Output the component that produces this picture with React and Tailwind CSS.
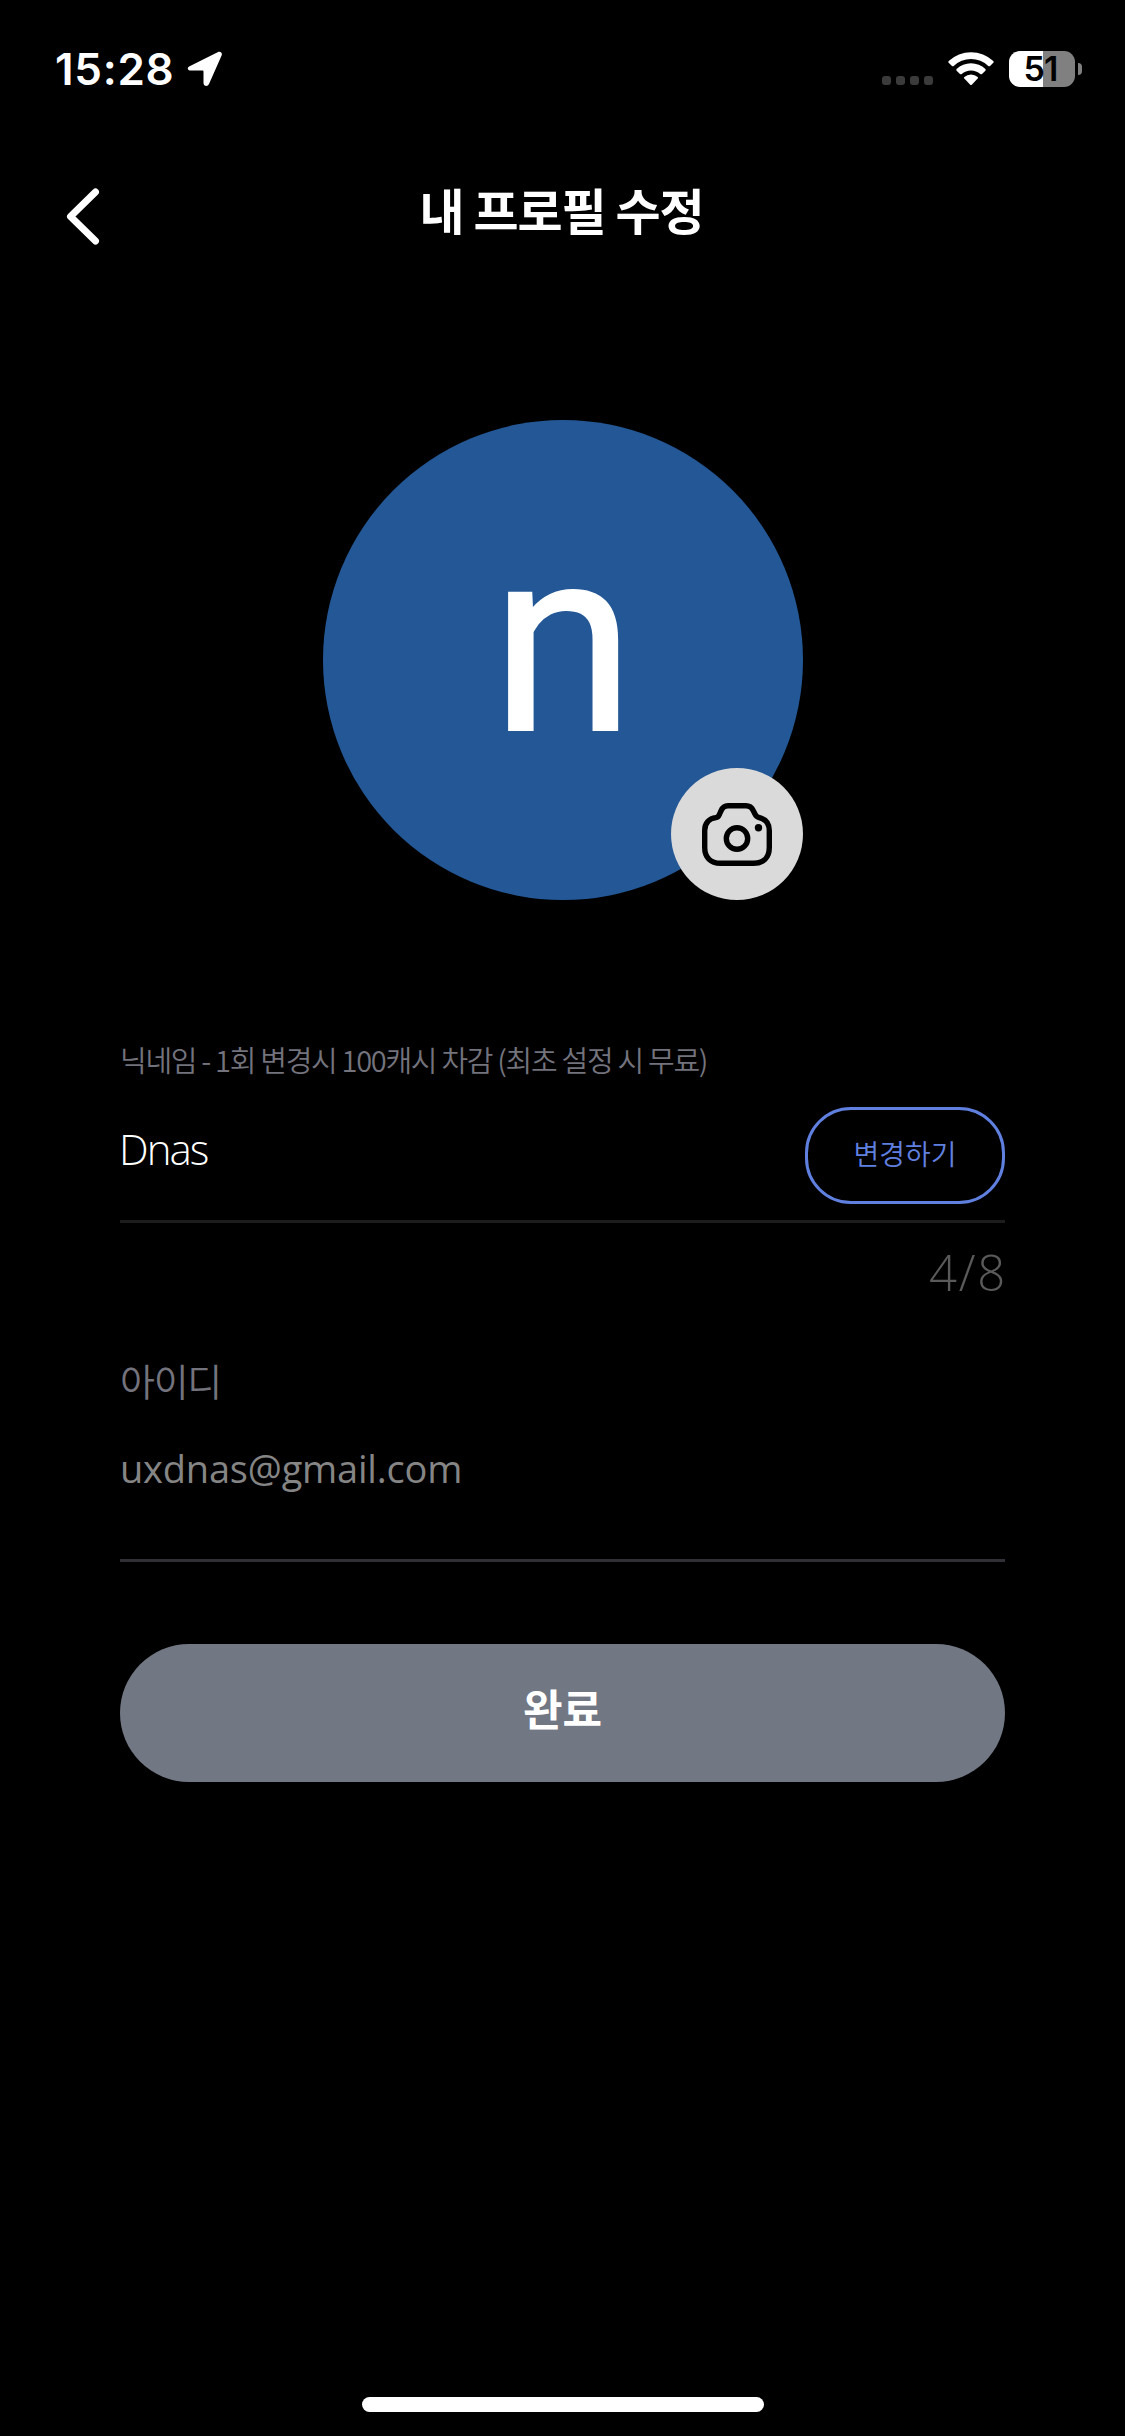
import React from 'react';

function LocationArrow() {
  return (
    <svg width="36" height="36" viewBox="0 0 36 36" fill="white">
      <path d="M2.6 15.2 L30.6 1.3 C33.6 -.2 35.8 2 34.5 4.8 L22 33 C20.7 36 16.5 35.3 16.5 32 V20.5 Q16.5 19.6 15.5 19.6 H4 C.5 19.6 -.4 16.7 2.6 15.2 Z" />
    </svg>
  );
}

function Wifi() {
  return (
    <svg width="46" height="34" viewBox="0 0 46 34" fill="white">
      <path d="M.7 9.1 A32.5 32.5 0 0 1 45.3 9.1 Q46 9.9 45.3 10.7 L42 14 Q41.2 14.7 40.3 14 A25 25 0 0 0 5.7 14 Q4.8 14.7 4 14 L.7 10.7 Q0 9.9 .7 9.1 Z" />
      <path d="M8.6 17.1 A20.8 20.8 0 0 1 37.4 17.1 Q38.1 17.9 37.4 18.7 L34 22 Q33.2 22.7 32.3 22 A13.8 13.8 0 0 0 13.7 22 Q12.8 22.7 12 22 L8.6 18.7 Q7.9 17.9 8.6 17.1 Z" />
      <path d="M16.3 25 A10 10 0 0 1 29.7 25 Q30.4 25.8 29.7 26.6 L24 32.4 Q23 33.4 22 32.4 L16.3 26.6 Q15.6 25.8 16.3 25 Z" />
    </svg>
  );
}

function Camera() {
  return (
    <svg width="70" height="63" viewBox="0 0 70 63" fill="none" stroke="black" strokeWidth="5.4">
      <path strokeLinejoin="round" d="M26 2.7 H44 C47.5 2.7 49.7 4.3 51.2 7.5 L52.7 10.5 C53.7 12.6 54.5 13.8 56.5 14.3 C63.5 16 67.3 20.5 67.3 27.5 V44.5 C67.3 54.5 61.5 60.3 51.5 60.3 H18.5 C8.5 60.3 2.7 54.5 2.7 44.5 V27.5 C2.7 20 7 15.5 14 14.6 C16.3 14.3 16.8 12.8 17.6 11 L19 7.8 C20.4 4.5 22.6 2.7 26 2.7 Z" />
      <circle cx="35" cy="35.5" r="10.7" />
      <circle cx="56.5" cy="24.7" r="3.7" fill="black" stroke="none" />
    </svg>
  );
}

function StatusBar() {
  return (
    <div className="flex h-[138px] items-start justify-between pl-[55px] pr-[43px]">
      <div className="flex items-center pt-[46px]">
        <span className="w-[132px] whitespace-nowrap font-['Inter',sans-serif] text-[44px] font-[560] leading-[46px] tracking-[0.7px]">15:28</span>
        <div className="-mt-[1px]"><LocationArrow /></div>
      </div>
      <div className="flex pt-[51px]">
        <div className="mt-[25px] flex gap-[5px]">
          {[0, 1, 2, 3].map((i) => (
            <i key={i} className="size-[9px] rounded-[3px] bg-[#3b3b3b]" />
          ))}
        </div>
        <div className="ml-[15px] mt-[1px]"><Wifi /></div>
        <div className="ml-[15px] h-9 w-[66px] rounded-[11px] bg-[linear-gradient(90deg,#fff_34px,#808080_34px)] pr-[3px] text-center font-['Inter',sans-serif] text-[34px] font-semibold leading-9 tracking-[-1px] text-black">
          51
        </div>
        <div className="ml-[3px] mt-3 h-3 w-1 rounded-r-full bg-[#808080]" />
      </div>
    </div>
  );
}

function App() {
  return (
    <div className="flex h-[2436px] w-[1125px] flex-col overflow-hidden bg-black font-['Noto_Sans_CJK_KR',sans-serif] text-white">
      <StatusBar />

      <header className="grid h-[282px] grid-cols-[1fr_auto_1fr] items-start">
        <svg className="ml-[66px] mt-[50px]" width="34" height="57" viewBox="0 0 34 57" fill="none" stroke="white" strokeWidth="7" strokeLinecap="round" strokeLinejoin="round">
          <path d="M29.5 4 L4.5 28.5 L29.5 53" />
        </svg>
        <h1 className="mt-[41px] whitespace-nowrap pr-[2px] text-[49px] font-bold leading-[60px] tracking-[-1.1px]">내 프로필 수정</h1>
      </header>

      {/* Avatar */}
      <div className="relative mx-auto flex size-[480px] justify-center rounded-full bg-[#235796]">
        <span className="mt-[91px] pl-[1px] font-['Roboto',sans-serif] text-[260px] leading-[260px] [-webkit-text-stroke:2px_white]">n</span>
        <button className="absolute bottom-0 right-0 flex size-[132px] items-center justify-center rounded-full bg-[#dadada]">
          <Camera />
        </button>
      </div>

      <main className="flex flex-col px-[120px]">
        <label className="mt-[139px] h-10 whitespace-nowrap text-[29px] font-[350] leading-10 tracking-[-1.3px] text-[#73737d]">
          닉네임 - 1회 변경시 100캐시 차감 (최초 설정 시 무료)
        </label>
        <div className="mt-[28px] flex h-[116px] items-start justify-between border-b-3 border-[#1c1c1c]">
          <span className="-ml-[1px] mt-[12px] font-['Open_Sans',sans-serif] text-[42px] font-light leading-[60px] tracking-[-2px]">Dnas</span>
          <button className="flex h-[97px] w-[200px] items-center justify-center rounded-[46px] border-3 border-[#6080e0] pb-[5px] text-[28px] font-[350] text-[#6080e0]">
            변경하기
          </button>
        </div>
        <div className="-mr-[2px] mt-[19px] h-[61px] text-right font-['Open_Sans',sans-serif] text-[49px] font-light leading-[60px] tracking-[1.8px] text-[#5a5a5a]">4/8</div>
        <label className="mt-[52px] h-[50px] text-[38px] font-[350] leading-[50px] tracking-[-1.3px] text-[#73737d]">아이디</label>
        <div className="mt-[35px] h-[122px] border-b-3 border-[#303036] font-['Open_Sans',sans-serif] text-[38px] leading-[56px] tracking-[-0.2px] text-[#858585]">uxdnas@gmail.com</div>
        <button className="mt-[82px] h-[138px] rounded-full bg-[#727784] pb-[12px] text-[43px] font-bold">완료</button>
      </main>

      <div className="mx-auto mb-[24px] mt-auto h-[15px] w-[402px] rounded-full bg-white" />
    </div>
  );
}

export default App;
